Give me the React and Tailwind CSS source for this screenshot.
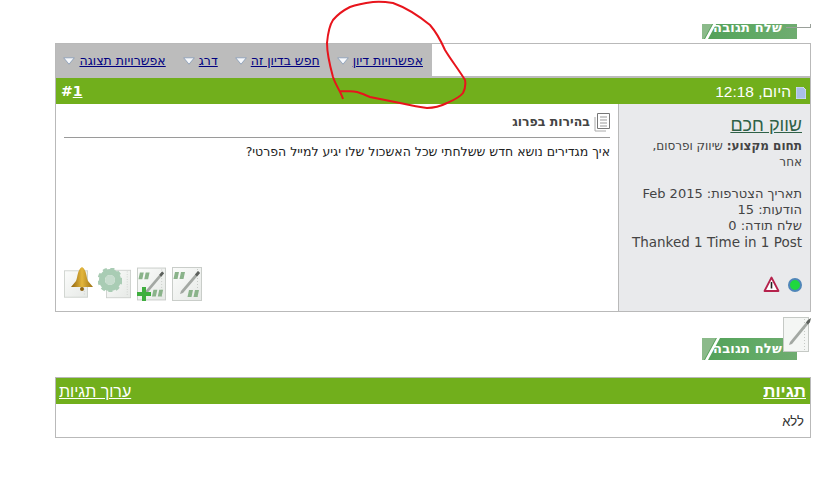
import React from "react";

const sans = "font-['DejaVu_Sans','Noto_Sans',sans-serif]";

const Caret = () => (
  <svg width="12" height="8" viewBox="0 0 12 8" className="shrink-0">
    <path d="M0.7 0.8 H11.3 L6 7.2 Z" fill="#f7f9fc" stroke="#8499b5" strokeWidth="0.8" strokeLinejoin="round" />
  </svg>
);

const NavItem = ({ label }) => (
  <div className="flex items-center gap-[4px]">
    <a className="text-[12.5px] text-[#000080] underline">{label}</a>
    <Caret />
  </div>
);

// green "send reply" button with the slash on its left end
const ReplyButton = () => (
  <div className="relative h-[22px] w-[95px] overflow-hidden bg-gradient-to-r from-[#52a058] via-[#5fa964] to-[#6fac70]">
    <svg width="20" height="22" viewBox="0 0 20 22" className="absolute left-[0px] top-0">
      <path d="M0 0 H14 L2 22 H0 Z" fill="#8bba8a" />
      <path d="M15 0 L18 0 L6 22 L3 22 Z" fill="#ffffff" />
    </svg>
    <span className="absolute right-[15px] top-[3px] text-[13px] font-bold leading-[16px] tracking-[0.2px] text-white">שלח תגובה</span>
  </div>
);

const Sheet = ({ children, className = "" }) => (
  <svg width="30" height="34" viewBox="0 0 30 34" className={className}>
    <defs>
      <linearGradient id="sheetFill" x1="0" y1="0" x2="1" y2="1">
        <stop offset="0" stopColor="#fbfcfb" />
        <stop offset="1" stopColor="#e6e9e6" />
      </linearGradient>
    </defs>
    <rect x="0.5" y="0.5" width="29" height="33" fill="url(#sheetFill)" stroke="#c9cdc9" />
    <path d="M25.5 2 V32" stroke="#c6cac6" strokeDasharray="1 2" />
    {children}
  </svg>
);

const Pen = () => (
  <>
    <path d="M9 24 L26 4 L28 6 L11 26 L8 27 Z" fill="#a3a8a3" />
    <path d="M23 7.5 L26 4 L28 6 L25 9.5 Z" fill="#5c605c" />
  </>
);

const Quotes = () => (
  <path d="M3 5 h4 l-1.5 7 h-4 Z M9 5 h4 l-1.5 7 h-4 Z M17 23 h4 l-1.5 7 h-4 Z M23 23 h4 l-1.5 7 h-4 Z" fill="#8ab38a" />
);

export default function App() {
  return (
    <div dir="rtl" className={`relative h-[494px] w-[823px] overflow-hidden bg-white pr-[12px] pt-[24px] ${sans}`}>
      {/* top button, cut off by the page above it */}
      <div className="relative flex h-[15px] items-end overflow-hidden pr-[14px]">
        <ReplyButton />
        <span className="absolute right-0 top-[3px] h-[1px] w-[25px] bg-[#9aa09a]" />
        <span className="absolute right-0 top-0 h-[3px] w-[1px] bg-[#9aa09a]" />
      </div>

      {/* post table */}
      <div className="mt-[4px] ml-[12px] mr-0 w-[756px] border border-[#b9b9b9] bg-white">
        <div className="flex h-[32px] justify-end">
          <div className="flex w-[376px] items-center gap-[17px] bg-[#bcbcbc] pr-[9px] pt-[2px]">
            <NavItem label="אפשרויות דיון" />
            <NavItem label="חפש בדיון זה" />
            <NavItem label="דרג" />
            <NavItem label="אפשרויות תצוגה" />
          </div>
        </div>
        <div className="flex h-[28px] items-center justify-between border-t-2 border-[#bcbcbc] bg-[#71af1c] pl-[5px] pr-[4px] text-white">
          <div className="flex items-center gap-[5px] pt-[1px] font-['Liberation_Sans',sans-serif] text-[15.5px]">
            <svg width="10" height="12" viewBox="0 0 10 12" className="mt-[2px]">
              <path d="M0 0 H7 L10 3 V12 H0 Z" fill="#a9bfe8" stroke="#e8eefb" strokeWidth="0.8" />
            </svg>
            <span>היום, 12:18</span>
          </div>
          <div dir="ltr" className="text-[14px] font-bold">
            #<span className="underline">1</span>
          </div>
        </div>
        <div className="flex h-[207px]">
          {/* user column */}
          <div className="relative w-[192px] shrink-0 border-l border-[#b9b9b9] bg-[#e9eaec] pr-[8px] pt-[8px] text-[#444]">
            <div className="font-['Liberation_Sans',sans-serif] text-[18px] leading-[26px] text-[#2f6147] underline">שווק חכם</div>
            <div className="text-[12px] leading-[16px]">
              <div className="pl-[30px]"><b>תחום מקצוע:</b> שיווק ופרסום, אחר</div>
              <div className="mt-[16px] text-[13px]">תאריך הצטרפות: Feb 2015</div>
              <div className="text-[13px]">הודעות: 15</div>
              <div className="text-[13px]">שלח תודה: 0</div>
              <div dir="ltr" className="text-right text-[13.5px]">Thanked 1 Time in 1 Post</div>
            </div>
            <div className="absolute bottom-[18px] right-[8px] flex items-center gap-[8px]">
              <span className="h-[14px] w-[14px] rounded-full border-2 border-[#4f86b8] bg-[#1fd83e]" />
              <svg width="17" height="17" viewBox="0 0 17 17">
                <path d="M8.5 1.5 L15.5 15 H1.5 Z" fill="#fff" stroke="#b5224c" strokeWidth="1.8" strokeLinejoin="round" />
                <path d="M8.5 6 V12.5" stroke="#222" strokeWidth="1.6" />
              </svg>
            </div>
          </div>
          {/* message column */}
          <div className="flex flex-1 flex-col pl-[8px] pr-[8px] pt-[9px] text-[#222]">
            <div className="flex items-center gap-[4px] border-b border-[#9a9a9a] pb-[5px]">
              <svg width="16" height="19" viewBox="0 0 16 19">
                <path d="M3.5 0.5 H15.5 V15.5 H3.5 Z" fill="#fff" stroke="#777" />
                <path d="M1 4 V18 H12" fill="none" stroke="#aaa" />
                <path d="M6 4 H13 M6 7 H13 M6 10 H13 M6 13 H13" stroke="#999" />
              </svg>
              <span className="text-[12.5px] font-bold text-[#444]">בהירות בפרוג</span>
            </div>
            <p className="mt-[6px] text-[12.5px] leading-[16px]">איך מגדירים נושא חדש ששלחתי שכל האשכול שלו יגיע למייל הפרטי?</p>
            <div dir="ltr" className="mt-auto mb-[10px] flex">
              <div className="relative h-[34px] w-[30px]">
                <Sheet className="h-[34px] w-[24px]" />
                <svg width="24" height="26" viewBox="0 0 24 26" className="absolute left-[6px] top-0">
                  <defs>
                    <linearGradient id="bellFill" x1="0" y1="0" x2="1" y2="0">
                      <stop offset="0" stopColor="#8f6410" />
                      <stop offset="0.5" stopColor="#e3b63c" />
                      <stop offset="1" stopColor="#9c7114" />
                    </linearGradient>
                  </defs>
                  <path d="M12 0 C7 3 8 10 6 14 L1 20 H23 L18 14 C16 10 17 3 12 0 Z" fill="url(#bellFill)" />
                  <circle cx="12" cy="22" r="2" fill="#8f6410" />
                </svg>
              </div>
              <div className="relative ml-[4px] h-[34px] w-[33px]">
                <Sheet className="absolute right-0 top-0 h-[34px] w-[25px]" />
                <svg width="24" height="24" viewBox="0 0 24 24" className="absolute left-0 top-[1px]">
                  <circle cx="12" cy="12" r="8" fill="none" stroke="#a9ccb4" strokeWidth="6" />
                  <circle cx="12" cy="12" r="11" fill="none" stroke="#a9ccb4" strokeWidth="3" strokeDasharray="4 3.4" />
                  <circle cx="12" cy="12" r="5" fill="#c6dccd" />
                </svg>
              </div>
              <div className="relative ml-[6px] h-[34px] w-[29px]">
                <Sheet className="h-[34px] w-[29px]"><Quotes /><Pen /></Sheet>
                <svg width="14" height="14" viewBox="0 0 14 14" className="absolute bottom-0 left-0">
                  <path d="M5 0 H9 V5 H14 V9 H9 V14 H5 V9 H0 V5 H5 Z" fill="#3fae3f" />
                </svg>
              </div>
              <Sheet className="ml-[6px]"><Quotes /><Pen /></Sheet>
            </div>
          </div>
        </div>
      </div>

      {/* lower reply button with the note on top */}
      <div className="relative mt-[26px] flex justify-start pr-[14px]">
        <ReplyButton />
        <div className="absolute -top-[21px] right-0">
          <svg width="30" height="36" viewBox="0 0 30 36">
            <rect x="2.5" y="0.5" width="25" height="34" fill="#f4f6f4" stroke="#c5c9c5" />
            <path d="M23.5 2 V33" stroke="#c6cac6" strokeDasharray="1 2" />
            <path d="M9 25 L27 3 L29 5 L11 27 L8 28 Z" fill="#a3a8a3" />
            <path d="M25 5.5 L27 3 L30 1 L29 5 L27 7.5 Z" fill="#5c605c" />
          </svg>
        </div>
      </div>

      {/* tags table */}
      <div className="mt-[17px] ml-[12px] w-[756px] border border-[#b9b9b9]">
        <div className="flex h-[26px] items-center justify-between bg-[#71af1c] pl-[3px] pr-[4px] pt-[1px] text-white">
          <span className="font-['Liberation_Sans',sans-serif] text-[17px] font-bold underline">תגיות</span>
          <a className="font-['Liberation_Sans',sans-serif] text-[16px] underline">ערוך תגיות</a>
        </div>
        <div className="h-[33px] pr-[6px] pt-[8px] font-['Liberation_Sans',sans-serif] text-[13px] text-[#333]">ללא</div>
      </div>

      {/* red hand drawn circle over the page */}
      <svg width="823" height="494" viewBox="0 0 823 494" className="pointer-events-none absolute left-0 top-0">
        <path
          d="M343 99 C341 92 336 86 333 77 C330 66 327 55 327 43 C328 32 329 26 333 20 C338 14 344 10 350 7 C358 4 365 3 373 2 C381 1 387 2 393 3 C407 8 419 16 430 25 C437 33 441 41 445 50 C451 60 459 70 465 80 C466 85 465 89 463 93 C459 98 454 100 447 103 C441 106 434 108 427 108 C418 107 409 105 400 103 C390 101 380 99 370 97 C365 95 361 93 357 92 C351 91 345 91 340 91"
          fill="none"
          stroke="#e8141c"
          strokeWidth="2"
        />
      </svg>
    </div>
  );
}
